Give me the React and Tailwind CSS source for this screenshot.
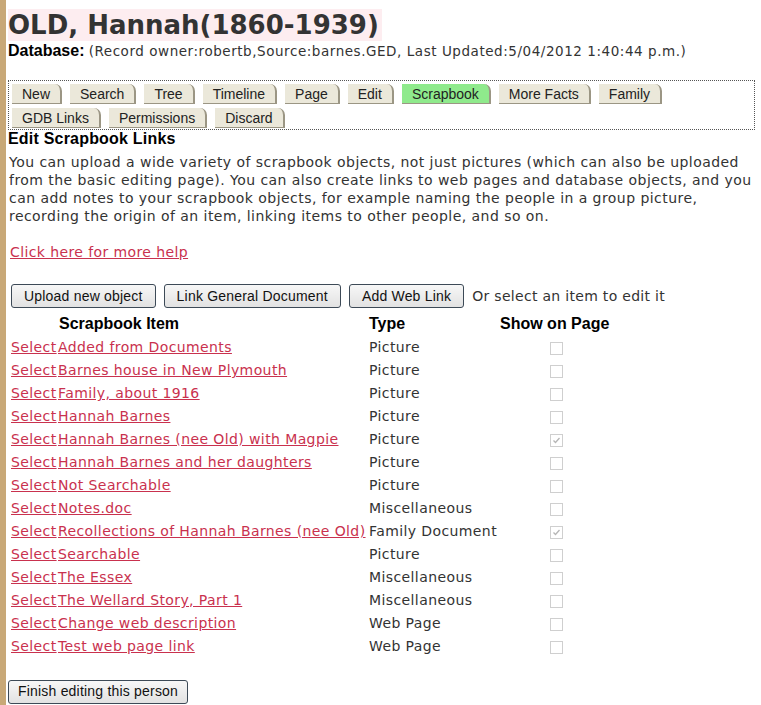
import React from "react";

const tabsRow1 = ["New", "Search", "Tree", "Timeline", "Page", "Edit", "Scrapbook", "More Facts", "Family"];
const tabsRow2 = ["GDB Links", "Permissions", "Discard"];

const items = [
  { name: "Added from Documents", type: "Picture", shown: false },
  { name: "Barnes house in New Plymouth", type: "Picture", shown: false },
  { name: "Family, about 1916", type: "Picture", shown: false },
  { name: "Hannah Barnes", type: "Picture", shown: false },
  { name: "Hannah Barnes (nee Old) with Magpie", type: "Picture", shown: true },
  { name: "Hannah Barnes and her daughters", type: "Picture", shown: false },
  { name: "Not Searchable", type: "Picture", shown: false },
  { name: "Notes.doc", type: "Miscellaneous", shown: false },
  { name: "Recollections of Hannah Barnes (nee Old)", type: "Family Document", shown: true },
  { name: "Searchable", type: "Picture", shown: false },
  { name: "The Essex", type: "Miscellaneous", shown: false },
  { name: "The Wellard Story, Part 1", type: "Miscellaneous", shown: false },
  { name: "Change web description", type: "Web Page", shown: false },
  { name: "Test web page link", type: "Web Page", shown: false },
];

const verdana = "font-['DejaVu_Sans',Verdana,sans-serif]";
const arial = "font-['Liberation_Sans',Arial,sans-serif]";

const Tab = ({ label }) => {
  const active = label === "Scrapbook";
  return (
    <span
      className={`inline-block h-[20px] px-[10px] leading-[20px] text-[14px] text-[#222] rounded-tr-[7px] border-r-[2px] border-b border-[#9b9684] ${
        active ? "bg-[#8fea8c]" : "bg-[#ebe8da]"
      }`}
    >
      {label}
    </span>
  );
};

const Button = ({ children, className = "px-[12px]" }) => (
  <button
    className={`h-[24px] ${className} ${arial} text-[14px] tracking-[0.2px] text-[#111] border border-[#3d4a57] rounded-[3px] bg-gradient-to-b from-[#f7f7f7] to-[#e2e2e2]`}
  >
    {children}
  </button>
);

const Check = ({ checked }) => (
  <span className="inline-flex w-[13px] h-[13px] border border-[#cfcfcf] bg-white items-center justify-center align-middle">
    {checked && (
      <svg width="9" height="9" viewBox="0 0 9 9">
        <path d="M1.5 4.5 L3.5 6.5 L7.5 2" fill="none" stroke="#b5b5b5" strokeWidth="1.3" />
      </svg>
    )}
  </span>
);

export default function App() {
  return (
    <div className="min-h-[705px] bg-white border-l-[6px] border-[#c8a877] pl-[2px] pr-[6px] text-[#333]">
      <div className="pt-[9px]">
        <h1 className={`inline-block bg-[#fdedf0] pr-[3px] ${verdana} font-bold text-[26px] leading-[32px] text-[#333]`}>
          OLD, Hannah(1860-1939)
        </h1>
      </div>
      <div className="leading-[18px]">
        <span className={`${arial} font-bold text-[16px] text-black`}>Database:</span>{" "}
        <span className={`${verdana} text-[13.5px] tracking-[0.55px]`}>
          (Record owner:robertb,Source:barnes.GED, Last Updated:5/04/2012 1:40:44 p.m.)
        </span>
      </div>

      <div className={`mt-[20px] border border-dotted border-[#555] pl-[3px] pt-[3px] pb-[1px] ${arial}`}>
        <div className="flex gap-[8px] mb-[4px]">
          {tabsRow1.map((t) => (
            <Tab key={t} label={t} />
          ))}
        </div>
        <div className="flex gap-[8px]">
          {tabsRow2.map((t) => (
            <Tab key={t} label={t} />
          ))}
        </div>
      </div>

      <h2 className={`${arial} font-bold text-[16px] tracking-[0.2px] leading-[18px] text-black`}>Edit Scrapbook Links</h2>
      <p className={`${verdana} text-[14px] tracking-[0.45px] leading-[18px] mt-[5px] pl-[1px]`}>
        You can upload a wide variety of scrapbook objects, not just pictures (which can also be uploaded
        from the basic editing page). You can also create links to web pages and database objects, and you
        can add notes to your scrapbook objects, for example naming the people in a group picture,
        recording the origin of an item, linking items to other people, and so on.
      </p>
      <p className={`${verdana} text-[14px] tracking-[0.4px] leading-[18px] mt-[18px] pl-[2px]`}>
        <a href="#" className="text-[#c9314e] underline">
          Click here for more help
        </a>
      </p>

      <div className="flex items-center gap-[8px] mt-[23px] pl-[3px]">
        <Button>Upload new object</Button>
        <Button>Link General Document</Button>
        <Button>Add Web Link</Button>
        <span className={`${verdana} text-[14px] tracking-[0.3px]`}>Or select an item to edit it</span>
      </div>

      <table className="mt-[4px] ml-[3px] w-[601px] border-collapse table-fixed">
        <thead>
          <tr className={`${arial} font-bold text-[16px] text-black h-[22px]`}>
            <th className="w-[47px]"></th>
            <th className="text-left font-bold pl-[1px] w-[311px]">Scrapbook Item</th>
            <th className="text-left font-bold w-[131px]">Type</th>
            <th className="text-left font-bold w-[112px]">Show on Page</th>
          </tr>
        </thead>
        <tbody className={`${verdana} text-[14px] tracking-[0.4px]`}>
          {items.map((it) => (
            <tr key={it.name} className="h-[23px]">
              <td className="whitespace-nowrap">
                <a href="#" className="text-[#c9314e] underline">Select</a>
              </td>
              <td className="whitespace-nowrap">
                <a href="#" className="text-[#c9314e] underline">{it.name}</a>
              </td>
              <td className="whitespace-nowrap">{it.type}</td>
              <td className="text-center">
                <Check checked={it.shown} />
              </td>
            </tr>
          ))}
        </tbody>
      </table>

      <div className="mt-[20px]">
        <Button className="px-[9px]">Finish editing this person</Button>
      </div>
    </div>
  );
}
